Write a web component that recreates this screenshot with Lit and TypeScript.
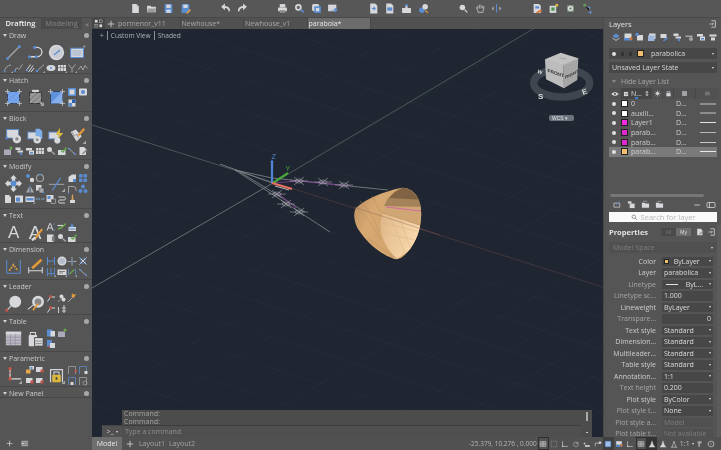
import { LitElement, html, css, svg } from "lit";
import { customElement } from "lit/decorators.js";

const L = "#d6d8dc";
const G = "#a2a4a7";
const B = "#5a8cd2";
const R = "#c5544a";
const Y = "#dcb93e";
const N = "#3a3a3a";

// all icons are drawn on a 20x20 box
const icons: Record<string, any> = {
  line: svg`<path d="M3 17L17 3" stroke=${G} stroke-width="1.6"/><circle cx="3" cy="17" r="1.8" fill=${B}/><circle cx="17" cy="3" r="1.8" fill=${B}/>`,
  pline: svg`<path d="M3 15H12A5.5 5.5 0 0 0 12 4H9" stroke=${L} stroke-width="1.5" fill="none"/><circle cx="3" cy="15" r="1.8" fill=${B}/><circle cx="11" cy="15" r="1.8" fill=${B}/><circle cx="9" cy="4" r="1.8" fill=${B}/>`,
  circle: svg`<circle cx="10" cy="10" r="9" fill=${L}/><circle cx="10" cy="10" r="7" fill="#c9ccd2"/><path d="M7 13L14 7" stroke=${B} stroke-width="1.4"/>`,
  rectb: svg`<rect x="2" y="5" width="15" height="11" fill=${L} stroke=${B} stroke-width="1.2"/><rect x="4" y="7" width="11" height="7" fill="#b9c3d3"/><circle cx="18" cy="3" r="1.2" fill=${G}/>`,
  arc: svg`<path d="M3 17A14 14 0 0 1 16 4" stroke=${G} stroke-width="2" fill="none"/><circle cx="3" cy="17" r="2" fill=${B}/>`,
  spline: svg`<path d="M2 16C6 2 9 18 13 9S17 4 18 4" stroke=${G} stroke-width="2" fill="none"/><circle cx="2" cy="16" r="2" fill=${B}/>`,
  hatchl: svg`<path d="M2 16L11 3M7 18L16 5M12 18L18 10" stroke=${L} stroke-width="2"/><circle cx="4" cy="14" r="2" fill=${B}/>`,
  ray: svg`<path d="M2 18L18 3" stroke=${G} stroke-width="2"/><circle cx="4" cy="16" r="2.4" fill=${B}/>`,
  ellipse: svg`<ellipse cx="10" cy="10" rx="9" ry="6" fill=${L}/><circle cx="10" cy="10" r="2" fill=${B}/>`,
  stack: svg`<rect x="2" y="4" width="16" height="12" fill=${L}/><path d="M2 9H18M7 4V16M13 4V16" stroke="#777" stroke-width="1.4"/>`,
  xl: svg`<path d="M3 3L10 11L17 3M10 11V19" stroke=${G} stroke-width="2" fill="none"/>`,
  wave: svg`<path d="M1 13L6 6L10 14L14 5L19 11" stroke=${G} stroke-width="2" fill="none"/>`,
  hatch: svg`<rect x="3" y="3" width="14" height="14" fill="#6f9fe8" stroke="#2b3c58"/><path d="M3 11L11 3M5 17L17 5M11 17L17 11" stroke="#8fb6f0"/><path d="M0 3H6M3 0V6M14 17H20M17 14V20M0 17H6M3 14V20M14 3H20M17 0V6" stroke=${L} stroke-width=".8"/>`,
  hatchg: svg`<path d="M6 1H14V4H6z" fill=${L}/><rect x="3" y="4" width="14" height="13" fill="#8a8a8a" stroke="#333"/><path d="M3 10L10 4M3 16L16 5M9 17L17 10" stroke="#b5b5b5"/><circle cx="17" cy="17" r="1.6" fill=${G}/>`,
  hatchb: svg`<rect x="3" y="3" width="14" height="14" fill="#5f92da" stroke="#2b3c58"/><path d="M3 17L17 3V17z" fill="#85aeea"/><path d="M0 3H6M3 0V6M14 17H20M17 14V20M14 3H20M17 0V6" stroke=${L} stroke-width=".8"/>`,
  sq: svg`<rect x="2" y="2" width="16" height="16" fill=${B}/><rect x="5" y="5" width="10" height="10" fill=${L}/>`,
  sqdot: svg`<rect x="2" y="3" width="16" height="14" rx="2" fill=${L}/><circle cx="10" cy="10" r="4" fill=${B}/>`,
  sqc: svg`<rect x="3" y="3" width="14" height="14" fill=${L}/><rect x="3" y="10" width="7" height="7" fill=${B}/><rect x="10" y="3" width="7" height="7" fill="#2a5fae"/>`,
  mon: svg`<rect x="2" y="3" width="14" height="10" fill=${L} stroke=${B}/><circle cx="14" cy="14" r="5" fill=${L}/><circle cx="14" cy="14" r="2" fill="#888"/><circle cx="2" cy="13" r="1.6" fill=${B}/>`,
  monf: svg`<rect x="1" y="6" width="12" height="8" fill=${L} stroke=${B}/><path d="M10 2H15L18 5V14H10z" fill="#7faee8"/><circle cx="12" cy="15" r="4.4" fill=${L}/><circle cx="12" cy="15" r="1.6" fill="#888"/>`,
  monb: svg`<rect x="1" y="6" width="12" height="8" fill=${L} stroke=${B}/><path d="M14 1L9 9H13L11 15L18 7H14z" fill=${Y}/><circle cx="11" cy="16" r="3.6" fill=${L}/>`,
  brush: svg`<path d="M2 6L8 3L15 11L9 17z" fill=${L}/><path d="M4 6L6 11L9 8L11 13" stroke="#888" fill="none"/><path d="M11 10L18 2" stroke="#e29a3a" stroke-width="2.6"/>`,
  move: svg`<path d="M10 0L14 4H12V8H16V6L20 10L16 14V12H12V16H14L10 20L6 16H8V12H4V14L0 10L4 6V8H8V4H6z" fill=${L}/><circle cx="10" cy="10" r="3.4" fill=${B}/>`,
  dots2: svg`<circle cx="6" cy="6" r="4" fill=${B}/><circle cx="14" cy="14" r="4.4" fill=${L}/>`,
  rot: svg`<circle cx="10" cy="10" r="7" fill="none" stroke=${G} stroke-width="2.4"/><circle cx="10" cy="3" r="2" fill=${B}/>`,
  mir: svg`<path d="M9 4V17H2zM11 4V17H18z" fill=${G}/><path d="M10 1V19" stroke=${B} stroke-width="1.2"/>`,
  copy: svg`<rect x="2" y="2" width="11" height="11" fill=${L}/><rect x="8" y="8" width="10" height="10" fill=${G} stroke=${N}/><circle cx="17" cy="17" r="2" fill=${B}/>`,
  trim: svg`<path d="M1 11H19" stroke=${G} stroke-width="1.2"/><path d="M15 3L5 18" stroke=${B} stroke-width="1.4"/>`,
  ext: svg`<path d="M3 18V8L10 3H18V12L12 18z" fill=${L}/><rect x="12" y="12" width="6" height="6" fill=${B}/>`,
  grid4: svg`<rect x="2" y="2" width="7" height="7" rx="1" fill=${B}/><rect x="11" y="2" width="7" height="7" rx="1" fill=${B}/><rect x="2" y="11" width="7" height="7" rx="1" fill=${B}/><rect x="11" y="11" width="7" height="7" rx="1" fill=${B}/>`,
  fil: svg`<path d="M3 18V5H12A6 6 0 0 1 18 11V14" stroke=${G} stroke-width="2" fill="none"/><circle cx="3" cy="18" r="1.6" fill=${B}/>`,
  tri3: svg`<circle cx="10" cy="5" r="4" fill=${B}/><circle cx="5" cy="14" r="4" fill=${B}/><circle cx="15" cy="14" r="4" fill=${B}/>`,
  doc: svg`<path d="M4 2H12L16 6V18H4z" fill=${L}/><path d="M12 2V6H16" fill="#9aa" />`,
  docb: svg`<path d="M3 2H12L16 6V18H3z" fill="#7fa8df"/><rect x="6" y="9" width="10" height="6" fill=${L}/>`,
  panel: svg`<rect x="2" y="3" width="16" height="14" fill=${L}/><rect x="4" y="7" width="8" height="8" fill=${B}/>`,
  box: svg`<rect x="1" y="5" width="18" height="11" fill=${L}/><rect x="3" y="8" width="14" height="5" fill=${B}/>`,
  split: svg`<path d="M1 10H8M12 10H19" stroke=${G} stroke-width="1.5"/><path d="M8 7L11 10L8 13" fill=${B}/><path d="M3 8V12M17 8V12" stroke=${B} stroke-width="1.5"/>`,
  ends: svg`<rect x="1" y="2" width="14" height="14" fill=${L}/><rect x="3" y="4" width="6" height="6" fill=${B}/><rect x="10" y="10" width="9" height="9" fill="#555" stroke=${L}/>`,
  curve: svg`<path d="M3 6H14C18 6 18 12 14 12H6C2 12 2 18 6 18H16" stroke=${L} stroke-width="2" fill="none"/>`,
  pencil: svg`<path d="M10 1L12 1L13 12H9z" fill="#d8a25c"/><rect x="6" y="12" width="10" height="6" fill=${L}/>`,
  brushOver: svg`<path d="M10 18L19 6" stroke="#e29a3a" stroke-width="2.6"/><path d="M7 19L11 16" stroke=${L} stroke-width="3"/>`,
  a: svg`<path d="M14 4H18M14 16H18" stroke=${B} stroke-width="1.6"/><path d="M2 17L7.5 3H9L14 17M4.5 12H11.5" stroke=${L} stroke-width="2" fill="none"/>`,
  chk: svg`<path d="M2 14L8 12L18 3" stroke="#69a84a" stroke-width="3" fill="none"/><path d="M1 7H12" stroke=${L} stroke-width="2.4"/>`,
  doca: svg`<rect x="3" y="10" width="15" height="8" fill=${L}/><path d="M6 10L10 2L14 10z" fill=${B}/><path d="M4 14H17" stroke=${B} stroke-width="2"/>`,
  pag: svg`<rect x="2" y="3" width="13" height="15" fill=${L}/><rect x="12" y="7" width="6" height="9" fill="#777"/>`,
  findr: svg`<circle cx="7" cy="7" r="5" fill=${L}/><path d="M11 11L18 17" stroke=${G} stroke-width="3"/>`,
  txtchk: svg`<rect x="2" y="8" width="15" height="10" fill=${L}/><path d="M8 9L12 12L19 3" stroke="#69a84a" stroke-width="2.6" fill="none"/>`,
  dimAll: svg`<path d="M2 2V18M18 2V18M2 18H18" stroke=${B} stroke-width="1.2" fill="none"/><path d="M5 15L10 8L15 15" stroke="#d9a341" stroke-width="2" stroke-dasharray="2 1.4" fill="none"/>`,
  dimP: svg`<path d="M2 11V18M18 11V18M2 15H18" stroke=${L} stroke-width="1.2" fill="none"/><path d="M6 12L17 2" stroke="#e29a3a" stroke-width="3"/>`,
  dimH: svg`<path d="M3 2V18M17 2V18M3 10H17" stroke=${B} stroke-width="2" fill="none"/>`,
  dimC: svg`<circle cx="10" cy="10" r="9" fill=${L}/><circle cx="10" cy="10" r="6" fill="#b4bccb"/>`,
  cross: svg`<path d="M1 11H19M10 2V19" stroke=${G} stroke-width="2"/><circle cx="10" cy="11" r="2" fill=${B}/>`,
  dimX: svg`<path d="M3 3L17 17M17 3L3 17" stroke=${L} stroke-width="2"/><rect x="5" y="5" width="10" height="10" fill="none" stroke=${B}/>`,
  dimV: svg`<path d="M3 2V18M10 2V18M17 2V18M3 13H17" stroke=${B} stroke-width="1.8" fill="none"/>`,
  dimT: svg`<rect x="1" y="5" width="18" height="11" fill=${L}/><path d="M4 9H16M4 12H12" stroke="#666" stroke-width="1.5"/>`,
  dimG: svg`<path d="M3 3V17M17 3V17" stroke=${B} stroke-width="1.6"/><path d="M5 14L9 10L15 5" stroke="#69a84a" stroke-width="2.4" fill="none"/>`,
  dimD: svg`<path d="M2 4L18 18" stroke=${G} stroke-width="2"/><circle cx="5" cy="6" r="2" fill=${B}/><circle cx="15" cy="15" r="2" fill=${B}/>`,
  leadA: svg`<path d="M2 18L12 8" stroke=${L} stroke-width="1.2"/><circle cx="12" cy="8" r="7" fill=${L}/><circle cx="2" cy="18" r="1.8" fill=${R}/>`,
  leadB: svg`<path d="M1 17L12 8" stroke=${L} stroke-width="1.2"/><circle cx="13" cy="8" r="7" fill=${L}/><circle cx="13" cy="8" r="4" fill="#888"/><path d="M7 18L13 10" stroke="#e29a3a" stroke-width="2"/>`,
  leadR: svg`<path d="M3 17L9 8H18" stroke=${L} stroke-width="2" fill="none"/><circle cx="9" cy="7" r="3" fill=${R}/>`,
  leadG: svg`<circle cx="9" cy="7" r="4" fill=${L}/><circle cx="13" cy="13" r="4" fill=${L}/><path d="M2 18L6 13" stroke=${L}/>`,
  leadS: svg`<path d="M2 18L14 6" stroke=${G} stroke-width="2"/><path d="M10 1L17 4L14 10L9 7z" fill="#e4943a"/><path d="M14 6L17 3" stroke=${Y} stroke-width="2"/>`,
  leadL: svg`<path d="M3 18V6M14 2V18M10 8H18M10 14H18" stroke=${L} stroke-width="1.8"/>`,
  table: svg`<rect x="1" y="2" width="18" height="16" fill="#bcb8c4"/><rect x="1" y="2" width="18" height="3" fill=${L}/><path d="M1 8.5H19M1 12H19M1 15.5H19M6.5 5V18M12 5V18" stroke="#8f8b98" stroke-width=".8"/>`,
  tableL: svg`<rect x="2" y="6" width="10" height="13" rx="1" fill=${L}/><path d="M4 6V3H10V6" stroke=${L} fill="none" stroke-width="1.2"/><rect x="9" y="9" width="10" height="10" fill=${L} stroke=${N}/><path d="M10 13H18M10 16H18" stroke="#888"/>`,
  tS: svg`<rect x="2" y="3" width="11" height="14" fill=${B}/><rect x="9" y="6" width="9" height="11" fill=${L}/>`,
  tG: svg`<rect x="2" y="7" width="14" height="11" fill="#aab"/><circle cx="16" cy="4" r="3" fill="#69a84a"/>`,
  tM: svg`<rect x="2" y="2" width="10" height="14" fill=${B}/><rect x="8" y="8" width="10" height="10" fill=${L}/><circle cx="5" cy="15" r="2" fill=${R}/>`,
  pA: svg`<path d="M6 1V14M6 14H19" stroke=${L} stroke-width="1.5"/><path d="M6 1V14" stroke=${R} stroke-dasharray="2 3" stroke-width="1.5"/><circle cx="6" cy="2" r="2" fill=${R}/><circle cx="6" cy="14" r="2" fill=${R}/>`,
  pB: svg`<rect x="9" y="2" width="9" height="7" fill=${L}/><rect x="2" y="9" width="9" height="8" fill="#e8a64a"/><rect x="11" y="4" width="4" height="4" fill=${B}/>`,
  pC: svg`<rect x="2" y="4" width="13" height="10" fill=${L}/><circle cx="14" cy="12" r="3.4" fill=${R}/>`,
  pD: svg`<path d="M3 18V3H17V18" stroke=${L} stroke-width="1.4" fill="none"/><rect x="5" y="9" width="10" height="9" rx="1" fill=${Y}/><path d="M7 9V6H13V9" stroke=${L} fill="none" stroke-width="1.2"/><rect x="9" y="12" width="2" height="3" fill=${N}/>`,
  pE: svg`<path d="M3 18V3H17V18" stroke=${G} stroke-width="1.5" fill="none"/><circle cx="17" cy="12" r="2.4" fill=${R}/>`,
  pF: svg`<path d="M3 18V3H17V18" stroke=${B} stroke-width="1.5" fill="none"/><rect x="13" y="12" width="6" height="6" fill=${L}/>`,
  pG: svg`<path d="M3 18V3H17V18" stroke=${B} stroke-width="1.5" fill="none"/><rect x="7" y="12" width="6" height="6" fill=${L}/>`,
  pH: svg`<path d="M3 18V3H17V18" stroke=${G} stroke-width="1.5" fill="none"/><circle cx="14" cy="14" r="4" fill="none" stroke=${G} stroke-width="1.5"/>`,
  undo: svg`<path d="M17 15C17 9 13 7 7 7" stroke=${L} stroke-width="3" fill="none"/><path d="M9 1L2 7L9 13z" fill=${L}/>`,
  redo: svg`<path d="M3 15C3 9 7 7 13 7" stroke=${L} stroke-width="3" fill="none"/><path d="M11 1L18 7L11 13z" fill=${L}/>`,
  folder: svg`<path d="M2 5H8L10 7H18V17H2z" fill=${L}/><path d="M4 10H19L16 17H2z" fill="#9c9c9c"/>`,
  save: svg`<rect x="3" y="2" width="14" height="16" rx="1" fill=${B}/><rect x="6" y="3" width="8" height="6" fill=${L}/><rect x="6" y="12" width="8" height="6" fill="#cfd8e6"/>`,
  saveas: svg`<rect x="3" y="2" width="14" height="16" rx="1" fill=${B}/><rect x="6" y="3" width="8" height="6" fill=${L}/><path d="M11 18L18 11L20 13L13 20z" fill="#e29a3a"/>`,
  print: svg`<rect x="5" y="2" width="10" height="6" fill=${L}/><rect x="2" y="8" width="16" height="7" rx="1" fill=${L}/><rect x="5" y="13" width="10" height="5" fill="#8f8f8f"/>`,
  preview: svg`<circle cx="8" cy="8" r="6" fill=${L}/><circle cx="8" cy="8" r="3" fill="#666"/><path d="M12 12L18 17" stroke=${B} stroke-width="3"/>`,
  publish: svg`<rect x="2" y="2" width="13" height="13" rx="3" fill=${L}/><rect x="6" y="6" width="12" height="12" fill=${B}/><rect x="9" y="9" width="6" height="6" fill=${L}/>`,
  plot: svg`<rect x="2" y="3" width="15" height="12" fill=${L}/><path d="M7 13H19M14 9L19 13L14 17z" fill=${B} stroke=${B}/>`,
  docIn: svg`<path d="M4 1H13L17 5V19H4z" fill=${L}/><path d="M7 10H13M10 7L13 10L10 13" stroke=${B} stroke-width="2" fill="none"/>`,
  docBl: svg`<path d="M4 1H13L17 5V19H4z" fill=${L}/><rect x="6" y="8" width="9" height="6" fill=${B}/>`,
  upload: svg`<path d="M2 9H8V5H12V9H18V18H2z" fill=${L}/><path d="M10 1L14 6H6z" fill=${B}/>`,
  link: svg`<circle cx="7" cy="13" r="5" fill=${B}/><circle cx="13" cy="7" r="5" fill=${L}/><path d="M13 13L18 18" stroke="#e29a3a" stroke-width="2.4"/>`,
  zoomI: svg`<circle cx="8" cy="8" r="5" fill=${L}/><path d="M12 12L17 17" stroke=${L} stroke-width="2.4"/>`,
  hand: svg`<path d="M5 10V5M8 10V3M11 10V3M14 10V5M5 10L3 9L6 17H14L16 10V6" stroke=${G} stroke-width="2" fill="none"/>`,
  orbit: svg`<path d="M10 2V18" stroke=${B} stroke-width="1.8"/><path d="M5 6L1 10L5 14zM15 6L19 10L15 14z" fill=${G}/>`,
  cTool: svg`<path d="M3 2H13L16 5V18H3z" fill=${L}/><rect x="6" y="6" width="7" height="4" fill=${B}/><path d="M7 17L16 12L18 15L10 19z" fill="#e2783a"/>`,
  cTool2: svg`<path d="M3 5H15V18H3z" fill=${L}/><rect x="6" y="8" width="6" height="6" fill="#4f9a4a"/><circle cx="16" cy="4" r="2.6" fill=${Y}/>`,
  cGear: svg`<path d="M4 4L16 4L16 16L4 16z" fill="#7d9a7d"/><circle cx="10" cy="10" r="5" fill=${L}/><circle cx="10" cy="10" r="2" fill="#59804f"/>`,
  cNet: svg`<circle cx="5" cy="4" r="2.6" fill="#5aa34e"/><circle cx="13" cy="9" r="2.6" fill=${B}/><circle cx="15" cy="17" r="2.6" fill=${B}/><path d="M5 4L13 9L15 17" stroke=${G}/>`,
  layA: svg`<path d="M10 3L17 8L10 13L3 8z" fill=${B}/><path d="M3 12L10 17L17 12" stroke=${L} stroke-width="1.6" fill="none"/>`,
  layB: svg`<rect x="3" y="3" width="14" height="9" fill=${L}/><rect x="2" y="12" width="16" height="5" fill=${B}/><circle cx="16" cy="13" r="3" fill="#d6743a"/>`,
  layC: svg`<rect x="4" y="6" width="12" height="11" fill=${L}/><rect x="1" y="2" width="6" height="6" fill=${B}/>`,
  layD: svg`<path d="M4 3H17V14H4z" fill=${L}/><path d="M2 7H15V18H2z" fill="#9db7dd"/>`,
  layE: svg`<path d="M3 4H15V12H3z" fill=${L}/><path d="M8 17L16 10L18 12L10 19z" fill=${B}/>`,
  layF: svg`<path d="M3 3H13V8H3z" fill=${L}/><path d="M7 9H18V13H7z" fill=${L}/><circle cx="14" cy="16" r="2.4" fill=${B}/>`,
  layG: svg`<path d="M3 7H17V10H3z" fill=${G}/><circle cx="14" cy="14" r="4" fill=${G}/>`,
  layH: svg`<path d="M2 4H14V9H2z" fill=${L}/><rect x="8" y="9" width="10" height="8" fill=${L}/><rect x="10" y="12" width="6" height="3" fill=${B}/>`,
  layI: svg`<path d="M3 5H17V9H3z" fill=${L}/><rect x="6" y="11" width="8" height="6" fill=${L}/>`,
  out: svg`<path d="M6 2H16V18H6" stroke=${L} stroke-width="2" fill="none"/><path d="M1 10H11M8 7L11 10L8 13" stroke=${L} stroke-width="1.8" fill="none"/>`,
  eye: svg`<path d="M1 10C5 4 15 4 19 10C15 16 5 16 1 10z" fill=${L}/><circle cx="10" cy="10" r="2.6" fill="#555"/>`,
  note: svg`<rect x="3" y="3" width="14" height="14" fill=${L}/><path d="M6 8L11 12L16 6" stroke="#444" stroke-width="2" fill="none"/>`,
  sun: svg`<circle cx="10" cy="10" r="4" fill=${L}/><path d="M10 1V19M1 10H19M4 4L16 16M16 4L4 16" stroke=${L} stroke-width="1.4"/>`,
  lock: svg`<rect x="4" y="9" width="12" height="9" fill=${L}/><path d="M6 9V5H14V9" stroke=${L} fill="none" stroke-width="2"/>`,
  sqf: svg`<rect x="3" y="3" width="14" height="14" fill=${G}/>`,
  bars: svg`<path d="M3 6H17M3 10H17M3 14H17" stroke=${G} stroke-width="1.5"/>`,
  minus: svg`<path d="M3 10H17" stroke=${L} stroke-width="2"/>`,
  layNew: svg`<path d="M2 7H15V16H2z" fill="none" stroke=${L} stroke-width="1.5"/><path d="M14 2L7 11" stroke=${B} stroke-width="1.6"/>`,
  layP: svg`<path d="M2 3H10V8H2z" fill=${L}/><path d="M6 8H17V18H6z" fill=${L}/>`,
  fold: svg`<path d="M2 6H8L10 8H18V17H2z" fill=${L}/><path d="M5 3H14" stroke=${L}/>`,
  pill: svg`<rect x="2" y="5" width="16" height="10" rx="2" fill="none" stroke=${L} stroke-width="1.6"/><path d="M7 5V15" stroke=${L} stroke-width="1.6"/>`,
  sel: svg`<path d="M3 2H12L16 6V18H3z" fill=${L}/><path d="M8 15L17 6L19 8L10 17z" fill="#888"/>`,
  blueSq: svg`<rect x="3" y="3" width="14" height="14" fill="#9dbfe8" stroke=${B} stroke-width="1.5"/>`,
  stGrid: svg`<path d="M3 4H17V16H3zM3 8H17M3 12H17M8 4V16M12 4V16" stroke=${L} fill="none" stroke-width="1.4"/>`,
  stDash: svg`<path d="M3 3H17V17H3z" stroke=${G} fill="none" stroke-dasharray="3 2" stroke-width="1.4"/>`,
  stOrtho: svg`<path d="M4 3V16H17" stroke=${L} fill="none" stroke-width="1.6"/><circle cx="4" cy="16" r="1.6" fill=${L}/>`,
  stPolar: svg`<circle cx="10" cy="11" r="6" fill="none" stroke=${G} stroke-width="1.8"/><path d="M10 11L15 5" stroke=${L} stroke-width="1.4"/>`,
  stSnap: svg`<path d="M4 6V12M1 9H7" stroke=${L} stroke-width="1.4"/><path d="M5 13H17V17H5z" fill=${L}/>`,
  stTrack: svg`<path d="M3 16V8H17" stroke=${L} fill="none" stroke-width="1.6"/><rect x="12" y="4" width="6" height="5" fill=${L}/>`,
  stAnno: svg`<path d="M10 2L7 12H13z M2 18L7 12H13L18 18" stroke=${L} fill=${L} stroke-width=".8"/>`,
  stAx: svg`<path d="M10 3L5 18M10 3L15 18M2 18H18" stroke=${L} stroke-width="1.5" fill="none"/>`,
  stGear: svg`<circle cx="10" cy="10" r="7" fill="none" stroke=${G} stroke-width="2.6"/><circle cx="10" cy="10" r="1.6" fill=${G}/>`,
  stWork: svg`<path d="M4 3H14V9H10V17H6V9H4z" fill=${G}/>`,
  plus: svg`<path d="M10 2V18M2 10H18" stroke=${L} stroke-width="2"/>`,
  addPanel: svg`<rect x="3" y="4" width="15" height="12" fill=${G}/><path d="M3 8H18M3 12H18" stroke="#555"/><path d="M3 10H9" stroke=${L} stroke-width="2"/>`,
  tabs: svg`<rect x="2" y="2" width="6" height="6" fill=${L}/><rect x="12" y="2" width="6" height="6" fill="none" stroke=${L}/><rect x="2" y="12" width="6" height="6" fill="none" stroke=${L}/><rect x="12" y="12" width="6" height="6" fill=${L}/>`,
  search: svg`<circle cx="8" cy="8" r="5" fill="none" stroke="#888" stroke-width="2.4"/><path d="M12 12L17 17" stroke="#888" stroke-width="2.6"/>`,
  calc: svg`<rect x="3" y="3" width="14" height="14" fill=${B}/><path d="M6 8H14M10 8V15" stroke=${L} stroke-width="2"/>`,
  ball: svg`<circle cx="10" cy="10" r="7" fill=${B}/><path d="M5 7H15" stroke=${L} stroke-width="2"/>`,
};

const ic = (name: string, size: number) => {
  const flyout = name.endsWith("*");
  const key = flyout ? name.slice(0, -1) : name;
  return html`<svg width=${size} height=${size} viewBox="0 0 20 20">
    ${icons[key]}${flyout ? svg`<path d="M20 20h-4l4-4z" fill="#aaa"/>` : ""}
  </svg>`;
};

// ribbon panels: a # marks a 2x2 cell, "" keeps a cell empty
const ribbon = [
  { name: "Draw", h: 45, items: ["#line", "#pline", "#circle", "#rectb", "arc*", "spline", "hatchl", "ray*", "ellipse", "stack*", "xl*", "wave"] },
  { name: "Hatch", h: 38, items: ["#hatch", "#hatchg*", "#hatchb", "sq", "sqdot", "sqc"] },
  { name: "Block", h: 48, items: ["#mon", "#monf", "#monb", "#brush*", "tG", "layF", "layH", "stack", "findr", "txtchk", "dimD", "sel"] },
  { name: "Modify", h: 49, items: ["#move", "dots2", "rot", "#trim*", "ext", "grid4", "mir", "copy", "fil", "tri3", "doc", "panel", "box*", "split", "ends", "curve", "pencil"] },
  { name: "Text", h: 34, items: ["#textA", "#textBrush", "a", "chk", "doca", "", "pag", "findr", "txtchk"] },
  { name: "Dimension", h: 37, items: ["#dimAll", "#dimP", "dimH", "dimC", "cross", "dimX", "dimV*", "dimT*", "dimG*", "dimD"] },
  { name: "Leader", h: 35, items: ["#leadA", "#leadB", "leadR", "leadG", "leadS", "", "leadR", "leadL"] },
  { name: "Table", h: 37, items: ["#table", "#tableL", "tS", "tG", "", "", "tM"] },
  { name: "Parametric", h: 35, items: ["#pA*", "pB", "pC", "#pD*", "pE", "pF", "pC", "pC", "pG", "pH"] },
  { name: "New Panel", h: 11, items: [] },
];

const toolbar = [
  ["doc", "folder", "save", "saveas"],
  ["undo", "redo"],
  ["print", "preview", "publish", "plot"],
  ["docIn", "docBl", "upload", "link"],
  ["zoomI", "hand", "orbit"],
  ["cTool", "cTool2", "cGear", "cNet"],
];

const docTabs = ["pormenor_v11", "Newhouse*", "Newhouse_v1", "parabola*"];

const layers = [
  { name: "0", color: "#ffffff", lw: 2, tone: "#8d8d8d" },
  { name: "auxili...", color: "#ffffff", lw: 2, tone: "#8d8d8d" },
  { name: "Layer1", color: "#f22be0", lw: 1, tone: "#e4e4e4" },
  { name: "parab...", color: "#e028d0", lw: 1.4, tone: "#b8b8b8" },
  { name: "parab...", color: "#e028d0", lw: 1, tone: "#c8c8c8" },
  { name: "parab...", color: "#f0c070", lw: 1, tone: "#e8e8e8", sel: true },
];

const props = [
  { label: "Color", value: "ByLayer", kind: "color" },
  { label: "Layer", value: "parabolica", kind: "select" },
  { label: "Linetype", value: "ByL...", kind: "ltype", dim: true },
  { label: "Linetype sc...", value: "1.000", kind: "input", dim: true },
  { label: "Lineweight", value: "ByLayer", kind: "select" },
  { label: "Transpare...", value: "0", kind: "trans", dim: true },
  { label: "Text style", value: "Standard", kind: "select" },
  { label: "Dimension...", value: "Standard", kind: "select" },
  { label: "Multileader...", value: "Standard", kind: "select" },
  { label: "Table style", value: "Standard", kind: "select" },
  { label: "Annotation...", value: "1:1", kind: "select" },
  { label: "Text height", value: "0.200", kind: "height", dim: true },
  { label: "Plot style", value: "ByColor", kind: "select" },
  { label: "Plot style t...", value: "None", kind: "select", dim: true },
  { label: "Plot style a...", value: "Model", kind: "off", dim: true },
  { label: "Plot table t...", value: "Not available", kind: "off", dim: true },
];

const statusIcons = [
  ["stGrid", "box"], ["stDash", ""], ["stOrtho", ""], ["stPolar", ""], ["stSnap", ""], ["stTrack", ""],
  ["blueSq", "on"], ["layB", ""], ["stOrtho", ""], ["stGrid", "box"], ["stAnno", "dark"], ["stAnno", ""], ["stAx", ""],
];

@customElement("view-scene")
class ViewScene extends LitElement {
  static styles = css`
    :host {
      display: block;
      width: 100%;
      height: 100%;
    }
    svg {
      display: block;
      font-family: "Liberation Sans", sans-serif;
    }
  `;

  gridLines() {
    const out = [];
    for (let i = -14; i < 30; i++) {
      const c = 125 + i * 31;
      out.push(svg`<line x1="92" y1=${c} x2="603" y2=${c + 0.318 * 511} stroke="#fff" stroke-opacity=".025"/>`);
    }
    for (let i = -4; i < 26; i++) {
      const c = 288 + i * 38;
      out.push(svg`<line x1="92" y1=${c} x2="603" y2=${c - 0.58 * 511} stroke="#fff" stroke-opacity=".022"/>`);
    }
    return out;
  }

  marker(x: number, y: number) {
    return svg`<g transform="translate(${x} ${y})" stroke="#b8bbbf" stroke-width=".5" fill="none">
      <path d="M-9 0H9M-5 -4L5 4M-5 4L5 -4"/><ellipse rx="4" ry="2"/>
    </g>`;
  }

  render() {
    const bowl =
      "M401 188C385 191 365 199 356 208C353 213 354 222 358 229C366 241 378 253 392 258C395 260 398 259 401 258C410 252 418 238 420 226C422 215 422 204 416 195C412 190 406 187 401 188Z";
    return html`<svg width="511" height="408" viewBox="92 29 511 408">
      <rect x="92" y="29" width="511" height="408" fill="#1f2631"/>
      ${this.gridLines()}
      <line x1="92" y1="125" x2="272" y2="182" stroke="#62666b" stroke-width=".7"/>
      <line x1="272" y1="182" x2="603" y2="287" stroke="#4f3a40" stroke-width=".7"/>
      <line x1="92" y1="288" x2="272" y2="183.5" stroke="#85888c" stroke-width=".7"/>
      <line x1="272" y1="183.5" x2="533" y2="29" stroke="#5f6f63" stroke-width=".7"/>
      <path d="M235 170L330 232M235 170L272 178L388 190M220 164L272 183M240 172L305 212" stroke="#94969a" stroke-width=".7" fill="none"/>
      <path d="M272 183L300 181L350 186M278 193L296 208" stroke="#7e3a94" stroke-width=".9" fill="none"/>
      ${[[299, 181], [323, 182], [344, 185], [277, 194], [286, 204], [299, 212]].map(([x, y]) => this.marker(x, y))}

      <path d="M272 183V161" stroke="#4f86d6" stroke-width="2.2"/>
      <path d="M270.4 162L272 159.5L273.6 162z" fill="#4f86d6"/>
      <text x="271.5" y="159" font-size="7.5" fill="#4f86d6">Z</text>
      <path d="M273 183L288 173" stroke="#4aa63c" stroke-width="2.2"/>
      <text x="285.5" y="171" font-size="7" fill="#4aa63c">Y</text>
      <path d="M272 183L292 189" stroke="#e8705f" stroke-width="2.2"/>
      <path d="M275 186L289 190" stroke="#d9d9d9" stroke-width=".8"/>

      <defs>
        <linearGradient id="skin" x1="0" y1="0" x2="1" y2=".5">
          <stop offset="0" stop-color="#b68c5f"/>
          <stop offset=".35" stop-color="#d6a872"/>
          <stop offset="1" stop-color="#d3a46c"/>
        </linearGradient>
        <linearGradient id="lit" x1="0" y1="0" x2="1" y2=".3">
          <stop offset="0" stop-color="#dfb788"/>
          <stop offset="1" stop-color="#fbdcb0"/>
        </linearGradient>
        <clipPath id="bowl"><path d=${bowl}/></clipPath>
      </defs>
      <path d=${bowl} fill="url(#skin)"/>
      <path d="M356 208C365 214 372 224 381 240M360 201C368 208 376 222 379 232M372 196C376 204 380 212 383 213M367 238C376 244 386 252 397 259" stroke="#b98e5e" stroke-width=".5" fill="none"/>
      <g clip-path="url(#bowl)">
        <path d="M402 188C392 192 385 203 383 213C379 225 378 240 397 259L425 240V185z" fill="#d0a674"/>
        <path d="M402 188C392 192 387 200 386 203L425 205V185z" fill="#7f6343"/>
        <path d="M388 198L425 200L425 207L384 206z" fill="#a5835a"/>
        <path d="M383 213L425 227L410 250L397 259C380 243 378 225 383 213Z" fill="url(#lit)"/>
        <path d="M380 222L420 232M381 232L414 240M389 214L405 253M400 219L410 247" stroke="#d9b488" stroke-width=".5"/>
        <path d="M386 207L425 211.5" stroke="#d06aa2" stroke-width="1"/>
        <path d="M383 213L425 227" stroke="#b89064" stroke-width=".6"/>
      </g>
      <line x1="354" y1="207" x2="440" y2="235" stroke="#8a5a50" stroke-width=".4"/>

      <ellipse cx="561.7" cy="83" rx="28" ry="14" fill="none" stroke="#3f464f" stroke-width="7.5"/>
      <g fill="#dcdcdc" font-size="8" font-weight="700">
        <text transform="matrix(.9 .3 -.3 .9 537 73)" font-size="5.5">W</text>
        <text x="538" y="98.5">S</text>
        <text transform="matrix(.9 -.3 .3 .9 583 95)">E</text>
      </g>
      <path d="M560.7 52.7L578.3 58.3L563.3 65L545 59.3z" fill="#c2c2c2"/>
      <path d="M545 59.3L563.3 65L564 88.3L546 79.3z" fill="#bcbcbc"/>
      <path d="M563.3 65L578.3 58.3L577.3 80L564 88.3z" fill="#a6a6a6"/>
      <path d="M545 59.3L563.3 65L578.3 58.3" stroke="#dcdcdc" stroke-width=".5" fill="none"/>
      <text transform="matrix(1 .34 0 1 547.5 72)" font-size="4.8" font-weight="700" fill="#333">FRONT</text>
      <text transform="matrix(1 -.48 0 1 565 79)" font-size="4.4" font-weight="700" fill="#333">RIGHT</text>
      <text transform="matrix(.8 .2 -.8 .3 558 58)" font-size="4" fill="#777">TOP</text>
      <rect x="549" y="115" width="25" height="6" rx="2" fill="#6d737c"/>
      <text x="552" y="120" font-size="5" fill="#dfe2e6">WCS ▾</text>
    </svg>`;
  }
}

@customElement("app-root")
class AppRoot extends LitElement {
  static styles = css`
    :host {
      display: grid;
      grid-template-columns: 92px 1fr 118px;
      grid-template-rows: 18px 419px 13px;
      width: 721px;
      height: 450px;
      overflow: hidden;
      background: #555;
      color: #d0d0d0;
      font: 7px "Open Sans", "Liberation Sans", sans-serif;
      filter: blur(0.35px);
    }
    svg {
      display: block;
      flex: none;
    }
    .toolbar {
      grid-column: 1 / 4;
      display: flex;
      gap: 24px;
      padding-left: 127px;
      background: #575757;
      border-bottom: 1px solid #484848;
      box-sizing: border-box;
    }
    .tool-group {
      display: flex;
    }
    .tool {
      width: 16.6px;
      display: flex;
      justify-content: center;
      align-items: center;
    }

    /* ribbon */
    .left {
      background: #555;
      overflow: hidden;
    }
    .ribbon-tabs {
      display: flex;
      height: 11px;
      align-items: center;
      font-size: 7.5px;
    }
    .ribbon-tab {
      width: 41px;
      height: 11px;
      line-height: 11px;
      text-align: center;
      color: #f2f2f2;
      font-weight: 600;
    }
    .ribbon-tab.off {
      background: #4b4b4b;
      color: #858585;
      font-weight: 400;
    }
    .collapse {
      width: 10px;
      text-align: center;
      color: #999;
    }
    .section {
      box-sizing: border-box;
      border-bottom: 1px solid #484848;
      overflow: hidden;
    }
    .section-head {
      display: flex;
      align-items: center;
      height: 13px;
      padding: 0 2px 0 3px;
      color: #c9c9c9;
    }
    .section-head .tri {
      width: 0;
      height: 0;
      margin-right: 2px;
      border: 2px solid transparent;
      border-top: 3px solid #d0d0d0;
      border-bottom: 0;
    }
    .section-head .name {
      flex: 1;
    }
    .pin {
      width: 5px;
      height: 5px;
      border-radius: 50%;
      background: #a8a8a8;
      margin-right: 1px;
    }
    .cells {
      display: grid;
      grid-template-columns: repeat(8, 10.7px);
      grid-auto-rows: 10.5px;
      padding-left: 3px;
    }
    .cell {
      display: flex;
      align-items: center;
      justify-content: center;
      position: relative;
    }
    .cell.big {
      grid-column: span 2;
      grid-row: span 2;
    }
    .letter {
      font-family: "Liberation Sans", sans-serif;
      font-size: 17px;
      line-height: 17px;
      color: #d6d8dc;
    }
    .letter.wide {
      font-size: 19px;
      line-height: 19px;
    }
    .cell svg.over {
      position: absolute;
      left: 2px;
      top: 2px;
    }

    /* middle */
    .middle {
      display: flex;
      flex-direction: column;
      position: relative;
      min-width: 0;
    }
    .doc-tabs {
      display: flex;
      height: 11px;
      flex: none;
      background: #515151;
      align-items: stretch;
    }
    .doc-icon {
      width: 13px;
      display: flex;
      align-items: center;
      justify-content: center;
      background: #474747;
    }
    .doc-plus {
      width: 12px;
      display: flex;
      align-items: center;
      justify-content: center;
    }
    .doc-tab {
      width: 63.5px;
      padding-left: 1px;
      line-height: 11px;
      color: #a6a6a6;
      border-right: 1px solid #474747;
      box-sizing: border-box;
    }
    .doc-tab.on {
      background: #6c6c6c;
      color: #e6e6e6;
    }
    .viewport {
      position: relative;
      flex: 1;
      min-height: 0;
    }
    .view-label {
      position: absolute;
      left: 8px;
      top: 1px;
      display: flex;
      gap: 3px;
      align-items: center;
      color: #aeb3b8;
      height: 11px;
      font-size: 6.6px;
    }
    .view-label span + span {
      border-left: 1px solid #8c9096;
      padding-left: 3px;
    }
    .command {
      position: absolute;
      left: 10px;
      right: 11px;
      bottom: 0;
      display: grid;
      grid-template-columns: 20px 1fr 11px;
      grid-template-rows: 15px 12px;
      color: #a5a5a5;
    }
    .cmd-log {
      grid-column: 2;
      grid-row: 1;
      background: #4c4c4c;
      padding: 0 2px;
      line-height: 7.5px;
    }
    .cmd-scroll {
      grid-column: 3;
      grid-row: 1 / 3;
      background: #4c4c4c;
      display: flex;
      flex-direction: column;
      align-items: center;
      justify-content: space-between;
      padding: 2px 0 4px;
      box-sizing: border-box;
    }
    .cmd-scroll i {
      width: 2px;
      height: 9px;
      background: #aaa;
    }
    .cmd-scroll b {
      width: 2px;
      height: 1px;
      background: #ccc;
    }
    .cmd-prompt {
      grid-column: 1;
      grid-row: 2;
      background: #515151;
      color: #d0d0d0;
      display: flex;
      align-items: center;
      justify-content: center;
      gap: 2px;
      border-top: 1px solid #444;
      box-sizing: border-box;
    }
    .cmd-input {
      grid-column: 2;
      grid-row: 2;
      background: #4f4f4f;
      border-top: 1px solid #3d3d3d;
      padding-left: 3px;
      line-height: 11px;
      color: #8f8f8f;
      box-sizing: border-box;
    }

    /* right */
    .right {
      position: relative;
      background: #555;
      overflow: hidden;
      padding-left: 5px;
      border-left: 1px solid #484848;
      box-sizing: border-box;
    }
    .prop-scroll {
      position: absolute;
      right: 0;
      top: 207px;
      bottom: 0;
      width: 4px;
      background: #5c5c5c;
    }
    .panel-head {
      display: flex;
      align-items: center;
      justify-content: space-between;
      padding: 0 4px 0 0;
      height: 12px;
      color: #e2e2e2;
      font-size: 7.5px;
    }
    .lay-tools {
      display: flex;
      height: 13px;
      align-items: center;
      margin-left: 1px;
    }
    .lay-tools div {
      width: 12.1px;
      display: flex;
      justify-content: center;
    }
    .combo {
      display: flex;
      align-items: center;
      width: 108px;
      height: 11px;
      margin-top: 3px;
      padding: 0 3px;
      box-sizing: border-box;
      background: #474747;
      border-radius: 1px;
      color: #d6d6d6;
    }
    .combo .grow {
      flex: 1;
    }
    .caret {
      flex: none;
      width: 0;
      height: 0;
      border: 1.5px solid transparent;
      border-top: 2px solid #e0e0e0;
      border-bottom: 0;
    }
    .dot {
      width: 4px;
      height: 4px;
      border-radius: 50%;
      background: #e0e0e0;
    }
    .faint {
      width: 3px;
      height: 4px;
      background: #333;
      margin-left: 5px;
    }
    .hide-row {
      display: flex;
      align-items: center;
      height: 10px;
      margin: 3px 0 2px;
      padding-left: 3px;
      color: #a9a9a9;
      gap: 5px;
    }
    .hide-row i {
      width: 0;
      height: 0;
      border: 2px solid transparent;
      border-top: 3px solid #8a8a8a;
      border-bottom: 0;
    }
    .lay-head {
      display: grid;
      grid-template-columns: 13px 30px 11px 11px 22px 22px;
      height: 11px;
      width: 109px;
      background: #515151;
    }
    .lay-head > div {
      display: flex;
      align-items: center;
      justify-content: center;
      border-right: 1px solid #474747;
      box-sizing: border-box;
      position: relative;
    }
    .lay-head .name-col {
      background: #464646;
      gap: 2px;
      color: #d8d8d8;
    }
    .lay-head .sort {
      position: absolute;
      left: 13px;
      bottom: 0;
      width: 3px;
      height: 2px;
      border-radius: 1px;
      background: #3a8ae0;
    }
    .lay-list {
      height: 91px;
      width: 108px;
    }
    .lay-row {
      display: grid;
      grid-template-columns: 13px 9px 45px 24px 17px;
      align-items: center;
      height: 9.6px;
      color: #cfcfcf;
    }
    .lay-row.sel {
      background: #7a7a7a;
    }
    .lay-row .dot {
      margin-left: 3px;
    }
    .swatch {
      width: 5px;
      height: 5px;
      border: 1px solid #222;
      margin-left: -1px;
    }
    .lay-line {
      width: 16px;
      background: currentColor;
    }
    .scroller {
      width: 94px;
      height: 3px;
      margin: 4px 0 0 1px;
      background: #767676;
      border-radius: 2px;
    }
    .lay-foot {
      display: flex;
      align-items: center;
      height: 15px;
      gap: 5px;
      padding-left: 4px;
      padding-right: 5px;
    }
    .lay-foot .grow {
      flex: 1;
    }
    .search {
      display: flex;
      align-items: center;
      justify-content: center;
      gap: 3px;
      width: 108px;
      height: 10px;
      background: #fafafa;
      color: #b7b7b7;
      font-size: 7.5px;
    }
    .prop-head {
      display: flex;
      align-items: center;
      height: 14px;
      margin-top: 3px;
      padding-right: 5px;
      font-weight: 700;
      font-size: 7.5px;
      color: #e0e0e0;
    }
    .prop-head .title {
      flex: 1;
    }
    .seg {
      display: flex;
      margin-right: 5px;
      font-size: 5px;
      font-weight: 400;
      color: #777;
    }
    .seg span {
      width: 15px;
      height: 8px;
      line-height: 8px;
      text-align: center;
      background: #4a4a4a;
    }
    .seg span.on {
      background: #6e6e6e;
      color: #ddd;
    }
    .space {
      display: flex;
      align-items: center;
      justify-content: space-between;
      width: 108px;
      height: 11px;
      margin: 3px 0 2.5px;
      padding: 0 4px;
      box-sizing: border-box;
      color: #7c7c7c;
      background: #505050;
    }
    .prop {
      display: grid;
      grid-template-columns: 47px 51px 10px;
      column-gap: 6px;
      width: 114px;
      height: 11.5px;
      align-items: center;
    }
    .prop .lab {
      text-align: right;
      color: #cdcdcd;
    }
    .prop.dim .lab {
      color: #a5a5a5;
    }
    .val {
      display: flex;
      align-items: center;
      gap: 3px;
      height: 9.5px;
      padding: 0 2px;
      background: #474747;
      color: #dedede;
      box-sizing: border-box;
      white-space: nowrap;
    }
    .val.off {
      background: #505050;
      color: #7d7d7d;
    }
    .val.num {
      justify-content: flex-end;
    }
    .val .grow {
      flex: 1;
    }
    .ltype-line {
      width: 15px;
      height: 1px;
      margin: 0 5px 0 2px;
      background: #e0e0e0;
    }
    .mini-sq {
      width: 3px;
      height: 3px;
      background: #f0c070;
      border: 1px solid #222;
    }

    /* status */
    .status {
      grid-column: 1 / 4;
      display: flex;
      align-items: stretch;
      background: #515151;
      color: #bdbdbd;
      padding-right: 5px;
    }
    .status-left {
      width: 92px;
      display: flex;
      align-items: center;
      gap: 7px;
      padding-left: 6px;
      box-sizing: border-box;
      background: #555;
    }
    .layout-tab {
      width: 30px;
      text-align: center;
      line-height: 13px;
      color: #a3a3a3;
    }
    .layout-tab.on {
      background: #6e6e6e;
      color: #e8e8e8;
    }
    .status-plus {
      width: 15px;
      display: flex;
      align-items: center;
      justify-content: center;
    }
    .coords {
      margin-left: auto;
      line-height: 13px;
      font-size: 6.5px;
      color: #b4b4b4;
      margin-right: 1px;
    }
    .st {
      width: 10.9px;
      display: flex;
      align-items: center;
      justify-content: center;
    }
    .st.box {
      outline: 1px solid #2f2f2f;
      outline-offset: -1px;
    }
    .st.dark {
      background: #333;
    }
    .st.on {
      background: #3f3f3f;
    }
    .ratio {
      width: 15px;
      display: flex;
      align-items: center;
      justify-content: center;
      gap: 2px;
    }
  `;

  renderRibbonItem(item: string) {
    if (item === "") return html`<div class="cell"></div>`;
    if (item === "#textA") return html`<div class="cell big"><span class="letter">A</span></div>`;
    if (item === "#textBrush") {
      return html`<div class="cell big">
        <span class="letter wide">A</span>
        <svg class="over" width="17" height="17" viewBox="0 0 20 20">${icons.brushOver}</svg>
      </div>`;
    }
    const big = item.startsWith("#");
    const name = big ? item.slice(1) : item;
    return html`<div class="cell ${big ? "big" : ""}">${ic(name, big ? 17 : 10)}</div>`;
  }

  renderPropValue(p: { value: string; kind: string }) {
    const caret = html`<span class="grow"></span><i class="caret"></i>`;
    switch (p.kind) {
      case "color":
        return html`<div class="val"><i class="mini-sq"></i><span>&nbsp;${p.value}</span>${caret}</div><div></div>`;
      case "select":
        return html`<div class="val"><span>${p.value}</span>${caret}</div><div></div>`;
      case "ltype":
        return html`<div class="val"><i class="ltype-line"></i><span>${p.value}</span>${caret}</div><div></div>`;
      case "input":
        return html`<div class="val"><span>${p.value}</span></div><div></div>`;
      case "trans":
        return html`<div class="val num"><span>${p.value}</span></div><div>${ic("ball", 9)}</div>`;
      case "height":
        return html`<div class="val"><span>${p.value}</span></div><div>${ic("calc", 9)}</div>`;
      default:
        return html`<div class="val off"><span>${p.value}</span></div><div></div>`;
    }
  }

  render() {
    return html`
      <div class="toolbar">
        ${toolbar.map(
          (group) => html`<div class="tool-group">
            ${group.map((name) => html`<div class="tool">${ic(name, 11)}</div>`)}
          </div>`
        )}
      </div>

      <div class="left">
        <div class="ribbon-tabs">
          <div class="ribbon-tab">Drafting</div>
          <div class="ribbon-tab off">Modeling</div>
          <div class="collapse">«</div>
        </div>
        ${ribbon.map(
          (s) => html`<div class="section" style="height:${s.h}px">
            <div class="section-head">
              <i class="tri"></i>
              <span class="name">${s.name}</span>
              <i class="pin"></i>
            </div>
            ${s.items.length
              ? html`<div class="cells">
                  ${s.items.map((item) => this.renderRibbonItem(item))}
                </div>`
              : ""}
          </div>`
        )}
      </div>

      <div class="middle">
        <div class="doc-tabs">
          <div class="doc-icon">${ic("tabs", 9)}</div>
          <div class="doc-plus">${ic("plus", 8)}</div>
          ${docTabs.map(
            (t, i) => html`<div class="doc-tab ${i === 3 ? "on" : ""}">${t}</div>`
          )}
        </div>
        <div class="viewport">
          <view-scene></view-scene>
          <div class="view-label">
            <span style="border:0">+</span><span>Custom View</span><span>Shaded</span>
          </div>
          <div class="command">
            <div class="cmd-log">Command:<br />Command:</div>
            <div class="cmd-scroll"><i></i><b></b></div>
            <div class="cmd-prompt"><span>&gt;_</span><i class="caret"></i></div>
            <div class="cmd-input">Type a command</div>
          </div>
        </div>
      </div>

      <div class="right">
        <div class="prop-scroll"></div>
        <div class="panel-head"><span>Layers</span>${ic("out", 8)}</div>
        <div class="lay-tools">
          ${["layA", "layB", "layC", "layD", "layE", "layF", "layG", "layH", "layI"].map(
            (n) => html`<div>${ic(n, 10)}</div>`
          )}
        </div>
        <div class="combo" style="margin-top:5px">
          <i class="dot"></i><i class="faint"></i><i class="faint"></i>
          <i class="swatch" style="margin-left:5px;background:#f0c070"></i>
          <span style="margin-left:7px">parabolica</span>
          <span class="grow"></span><i class="caret"></i>
        </div>
        <div class="combo">
          <span>Unsaved Layer State</span>
          <span class="grow"></span><i class="caret"></i>
        </div>
        <div class="hide-row"><i></i>Hide Layer List</div>
        <div class="lay-head">
          <div>${ic("eye", 8)}</div>
          <div class="name-col">${ic("note", 6)}<span>N...</span><span>⇕</span><i class="sort"></i></div>
          <div>${ic("sun", 7)}</div>
          <div>${ic("lock", 7)}</div>
          <div>${ic("sqf", 7)}</div>
          <div style="border:0">${ic("bars", 7)}</div>
        </div>
        <div class="lay-list">
          ${layers.map(
            (l) => html`<div class="lay-row ${l.sel ? "sel" : ""}">
              <i class="dot"></i>
              <i class="swatch" style="background:${l.color}"></i>
              <span>${l.name}</span>
              <span>D...</span>
              <i class="lay-line" style="height:${l.lw}px;color:${l.tone}"></i>
            </div>`
          )}
        </div>
        <div class="scroller"></div>
        <div class="lay-foot">
          ${ic("layNew", 9)}${ic("layP", 9)}${ic("fold", 9)}${ic("fold", 9)}
          <span class="grow"></span>${ic("minus", 8)}${ic("pill", 10)}
        </div>
        <div class="search">${ic("search", 7)}Search for layer</div>
        <div class="prop-head">
          <span class="title">Properties</span>
          <div class="seg"><span>All</span><span class="on">My</span></div>
          ${ic("sel", 8)}<span style="width:4px"></span>${ic("out", 8)}
        </div>
        <div class="space"><span>Model Space</span><i class="caret"></i></div>
        ${props.map(
          (p) => html`<div class="prop ${p.dim ? "dim" : ""}">
            <div class="lab">${p.label}</div>
            ${this.renderPropValue(p)}
          </div>`
        )}
      </div>

      <div class="status">
        <div class="status-left">${ic("plus", 7)}${ic("addPanel", 9)}</div>
        <div class="layout-tab on">Model</div>
        <div class="status-plus">${ic("plus", 8)}</div>
        <div class="layout-tab">Layout1</div>
        <div class="layout-tab">Layout2</div>
        <div class="coords">-25.379, 10.276 , 0.000</div>
        ${statusIcons.map(
          ([n, mod]) => html`<div class="st ${mod}">${ic(n, 8)}</div>`
        )}
        <div class="ratio"><span>1:1</span><i class="caret"></i></div>
        <div class="st">${ic("stWork", 8)}</div>
        <div class="st">${ic("stGear", 8)}</div>
      </div>
    `;
  }
}
